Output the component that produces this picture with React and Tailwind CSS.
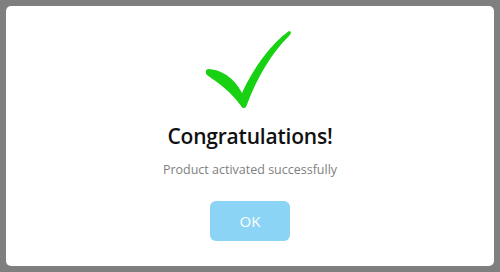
export default function App() {
  return (
    <div className="w-[500px] h-[272px] bg-[#7f7f7f] p-[6px] box-border" style={{ fontFamily: '"Open Sans", "Noto Sans", sans-serif' }}>
      <div className="w-full h-full bg-white rounded-[5px] flex flex-col items-center">
        <svg className="mt-[23px] ml-[-2px]" width="86" height="80" viewBox="0 0 86 80">
          <path d="M2 40 C 14 40, 28 48, 36 64 C 48 38, 66 14, 83 2 C 86 3, 85 5, 83 7 C 66 24, 52 46, 40 78 C 38 80, 36 79, 35 77 C 26 64, 14 55, 1 46 C -1 44, -1 41, 2 40 Z" fill="#18d112" />
        </svg>
        <div className="mt-[14px] text-[21px] leading-[26px] font-semibold text-[#111] tracking-[-0.2px]">Congratulations!</div>
        <div className="mt-[13px] text-[12.5px] leading-[16px] text-[#808080]">Product activated successfully</div>
        <button className="mt-[23px] w-[80px] h-[40px] rounded-[6px] bg-[#8cd4f5] text-white text-[15px]">OK</button>
      </div>
    </div>
  );
}
